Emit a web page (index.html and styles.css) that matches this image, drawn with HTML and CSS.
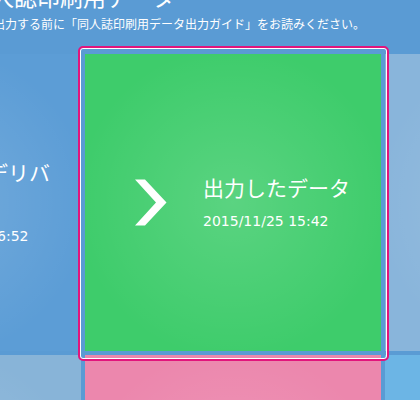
FILE: index.html
```html
<!DOCTYPE html>
<html lang="ja">
<head>
<meta charset="utf-8">
<title>同人誌印刷用データ</title>
<link rel="stylesheet" href="styles.css">
</head>
<body>
<header class="head">
  <h1 class="head-title">同人誌印刷用データ</h1>
  <p class="head-lead">出力する前に「同人誌印刷用データ出力ガイド」をお読みください。</p>
</header>
<main class="grid">
  <div class="tile tile-blue">
    <svg class="tile-arrow" viewBox="0 0 32 47" aria-hidden="true"><polygon points="0,0.5 10,0.5 31.5,23.5 10,46.5 0,46.5 21,23.5" fill="#fff"/></svg>
    <div class="tile-text">
      <p class="tile-title">コミックデリバリー</p>
      <p class="tile-date">2015/11/25 16:52</p>
    </div>
  </div>
  <div class="tile tile-green is-selected">
    <svg class="tile-arrow" viewBox="0 0 32 47" aria-hidden="true"><polygon points="0,0.5 10,0.5 31.5,23.5 10,46.5 0,46.5 21,23.5" fill="#fff"/></svg>
    <div class="tile-text">
      <p class="tile-title">出力したデータ</p>
      <p class="tile-date">2015/11/25 15:42</p>
    </div>
  </div>
  <div class="tile tile-gray"></div>
  <div class="tile tile-sky2"></div>
  <div class="tile tile-pink"></div>
  <div class="tile tile-sky"></div>
</main>
</body>
</html>
```
FILE: styles.css
```css
html, body {
  margin: 0;
  overflow: hidden;
}
body {
  width: 420px;
  height: 400px;
  background: #5a9bd4;
  color: #fff;
  font-family: "Noto Sans CJK JP", "Noto Sans", sans-serif;
}
.head {
  display: flex;
  flex-direction: column;
  height: 54px;
}
.head-title {
  margin: -15px 0 0 -32px;
  font-size: 23px;
  line-height: 23px;
  font-weight: 400;
  white-space: nowrap;
}
.head-lead {
  margin: 10px 0 0 -7px;
  font-size: 12px;
  line-height: 12px;
  white-space: nowrap;
}
.grid {
  display: grid;
  grid-template-columns: repeat(3, 296px);
  grid-auto-rows: 297px;
  gap: 4px;
  width: 896px;
  margin-left: -215px;
}
.tile {
  position: relative;
  display: flex;
  align-items: center;
  gap: 36px;
  padding-left: 50px;
  background-image: radial-gradient(circle farthest-corner at 50% 50%, rgba(255,255,255,0.15), rgba(255,255,255,0) 75%);
}
.tile-blue { background-color: #5c9dd6; }
.tile-green { background-color: #3ecc6b; }
.tile-gray { background-color: #89b5db; }
.tile-sky2 { background-color: #88b4d8; }
.tile-pink { background-color: #ec87ad; }
.tile-sky { background-color: #6cb5e5; }
.tile-arrow {
  flex: none;
  width: 32px;
  height: 47px;
}
.tile-text {
  width: 150px;
}
.tile-title {
  margin: 0;
  font-size: 21px;
  line-height: normal;
  font-weight: 400;
}
.tile-date {
  margin: 7px 0 0;
  font-family: "DejaVu Sans", sans-serif;
  font-size: 14px;
  line-height: 25px;
  white-space: nowrap;
}
.is-selected::after {
  content: "";
  position: absolute;
  top: -8px;
  left: -7px;
  right: -8px;
  bottom: -10px;
  border: 2px solid #e2157c;
  border-radius: 5px;
  box-shadow: inset 0 0 0 1px #fff;
  z-index: 2;
  pointer-events: none;
}
```
